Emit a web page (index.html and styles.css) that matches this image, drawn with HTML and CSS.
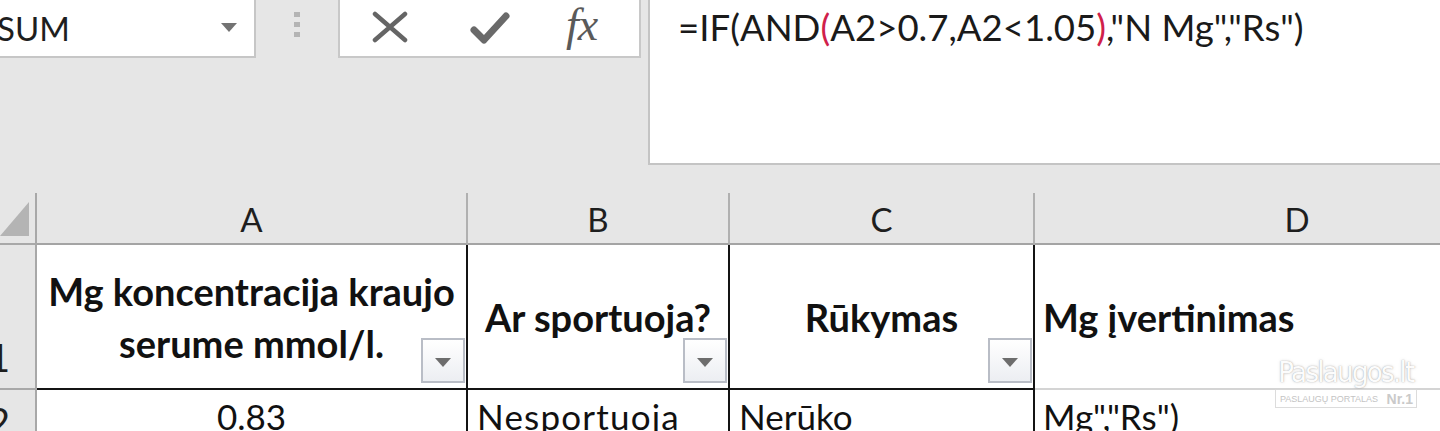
FILE: index.html
```html
<!DOCTYPE html>
<html lang="lt">
<head>
<meta charset="utf-8">
<title>Excel</title>
<link rel="stylesheet" href="styles.css">
</head>
<body>
<div class="app">
  <div class="toolbar">
    <div class="namebox">
      <span class="name">SUM</span>
      <svg class="nb-arrow" width="16" height="9" viewBox="0 0 16 9"><path d="M0 0H16L8 9Z" fill="#737373"/></svg>
    </div>
    <div class="grip"><i></i><i></i><i></i></div>
    <div class="fbtns">
      <svg class="ic-x" width="36" height="32" viewBox="0 0 36 32"><path d="M3 3L33 29M33 3L3 29" stroke="#656565" stroke-width="4.5" stroke-linecap="round" fill="none"/></svg>
      <svg class="ic-check" width="40" height="33" viewBox="0 0 40 33"><path d="M4 19L14 29L36 5" stroke="#6a6a6a" stroke-width="7" stroke-linecap="round" stroke-linejoin="round" fill="none"/></svg>
      <span class="fx">fx</span>
    </div>
    <div class="fbar">
      <span class="formula">=IF(AND<span class="paren">(</span>A2&gt;0.7,A2&lt;1.05<span class="paren">)</span>,"N Mg","Rs")</span>
    </div>
  </div>

  <div class="sheet">
    <div class="corner"><svg width="29" height="34" viewBox="0 0 29 34"><path d="M29 0V34H0Z" fill="#b4b4b4"/></svg></div>
    <div class="colhead">A</div>
    <div class="colhead">B</div>
    <div class="colhead">C</div>
    <div class="colhead last">D</div>

    <div class="rowhead"><span>1</span></div>
    <div class="cell hdr boxed">
      <span>Mg koncentracija kraujo<br>serume mmol/l.</span>
      <span class="filter"><svg width="16" height="9" viewBox="0 0 16 9"><path d="M0 0H16L8 9Z" fill="#6d6d6d"/></svg></span>
    </div>
    <div class="cell hdr boxed">
      <span>Ar sportuoja?</span>
      <span class="filter"><svg width="16" height="9" viewBox="0 0 16 9"><path d="M0 0H16L8 9Z" fill="#6d6d6d"/></svg></span>
    </div>
    <div class="cell hdr boxed">
      <span>Rūkymas</span>
      <span class="filter"><svg width="16" height="9" viewBox="0 0 16 9"><path d="M0 0H16L8 9Z" fill="#6d6d6d"/></svg></span>
    </div>
    <div class="cell hdr left plain">
      <span>Mg įvertinimas</span>
    </div>

    <div class="rowhead r2"><span>2</span></div>
    <div class="cell data center boxed">0.83</div>
    <div class="cell data boxed wide">Nesportuoja</div>
    <div class="cell data boxed">Nerūko</div>
    <div class="cell data plain">Mg","Rs")</div>
  </div>

  <div class="watermark">
    <div class="wm-title">Paslaugos.lt</div>
    <div class="wm-sub"><span>PASLAUGŲ PORTALAS</span><b>Nr.1</b></div>
  </div>
</div>
</body>
</html>
```

FILE: styles.css
```css
html, body {
  margin: 0;
  padding: 0;
}
body {
  width: 1440px;
  height: 431px;
  overflow: hidden;
  background: #e6e6e6;
  font-family: Lato, "Noto Sans", sans-serif;
  color: #111;
}
.app {
  position: relative;
  width: 1440px;
  height: 431px;
  overflow: hidden;
}

/* ---------- toolbar ---------- */
.toolbar {
  display: flex;
  align-items: flex-start;
  height: 165px;
}
.namebox {
  box-sizing: border-box;
  width: 256px;
  height: 58px;
  background: #fff;
  border-right: 2px solid #c6c6c6;
  border-bottom: 2px solid #c6c6c6;
  display: flex;
  align-items: center;
  justify-content: space-between;
  padding-right: 17px;
}
.name {
  font-size: 33px;
  margin-left: -3px;
  margin-top: -1px;
  color: #1e1e1e;
}
.nb-arrow {
  margin-top: -2px;
}
.grip {
  width: 82px;
  display: flex;
  flex-direction: column;
  align-items: center;
  gap: 5px;
  padding-top: 12px;
}
.grip i {
  display: block;
  width: 6px;
  height: 5px;
  background: #b4b4b4;
}
.fbtns {
  box-sizing: border-box;
  width: 303px;
  height: 58px;
  background: #fff;
  border: 2px solid #c8c8c8;
  border-top: none;
  display: flex;
  align-items: center;
  padding-left: 32px;
}
.ic-x {
  margin-top: -2px;
}
.ic-check {
  margin-left: 62px;
  margin-top: -2px;
}
.fx {
  margin-left: 56px;
  font-family: "Liberation Serif", serif;
  font-style: italic;
  font-size: 46px;
  color: #5a5a5a;
  margin-top: -8px;
  letter-spacing: -1px;
}
.fbar {
  box-sizing: border-box;
  margin-left: 7px;
  flex: 1;
  height: 165px;
  background: #fff;
  border-left: 2px solid #c4c4c4;
  border-bottom: 2px solid #c4c4c4;
  padding-left: 28px;
  padding-top: 5px;
}
.formula {
  font-size: 36.6px;
  color: #1a1a1a;
  line-height: 44px;
}
.paren {
  color: #d0204a;
}

/* ---------- sheet ---------- */
.sheet {
  margin-top: 28px;
  display: grid;
  grid-template-columns: 37px 431px 262px 305px 524px;
  grid-template-rows: 52px 145px 60px;
}
.corner {
  box-sizing: border-box;
  border-right: 2px solid #a8a8a8;
  border-bottom: 2px solid #a8a8a8;
  padding-top: 9px;
}
.corner svg {
  display: block;
}
.colhead {
  box-sizing: border-box;
  border-right: 2px solid #b0b0b0;
  border-bottom: 2px solid #a4a4a4;
  display: flex;
  align-items: center;
  justify-content: center;
  font-size: 33px;
  color: #1e1e1e;
  padding-top: 2px;
}
.colhead.last {
  border-right: none;
}
.rowhead {
  box-sizing: border-box;
  border-right: 2px solid #a8a8a8;
  border-bottom: 2px solid #a8a8a8;
  display: flex;
  align-items: flex-end;
  justify-content: flex-end;
  padding-right: 25px;
  padding-bottom: 12px;
  font-size: 38px;
  line-height: 1;
  color: #1e1e1e;
}
.rowhead.r2 {
  align-items: flex-start;
  padding-top: 12px;
  padding-bottom: 0;
  border-bottom: none;
}
.cell {
  box-sizing: border-box;
  background: #fff;
  position: relative;
  display: flex;
}
.cell.boxed {
  border-right: 2px solid #141414;
}
.hdr {
  border-bottom: 2px solid #141414;
  align-items: center;
  justify-content: center;
  text-align: center;
  font-weight: 700;
  font-size: 38px;
  line-height: 52px;
}
.hdr.left {
  justify-content: flex-start;
  text-align: left;
  padding-left: 8px;
  border-bottom-color: #d4d4d4;
}
.filter {
  position: absolute;
  right: 1px;
  bottom: 5px;
  box-sizing: border-box;
  width: 44px;
  height: 45px;
  border: 2px solid #b9bdc6;
  background: linear-gradient(#ffffff, #eceef2);
  display: flex;
  align-items: center;
  justify-content: center;
}
.filter svg {
  margin-top: 4px;
}
.data {
  font-size: 35px;
  padding-left: 9px;
  padding-top: 6px;
  line-height: 40px;
  color: #111;
}
.data.wide {
  letter-spacing: 1.2px;
}
.data.center {
  justify-content: center;
  padding-left: 0;
}
.data.plain {
  padding-left: 8px;
}

/* ---------- watermark overlay ---------- */
.watermark {
  position: absolute;
  left: 1275px;
  top: 355px;
  width: 142px;
  display: flex;
  flex-direction: column;
  align-items: stretch;
}
.wm-title {
  font-family: "DejaVu Sans", sans-serif;
  font-stretch: condensed;
  font-weight: 400;
  font-size: 29px;
  line-height: 34px;
  letter-spacing: -1.7px;
  color: rgba(255, 255, 255, 0.98);
  text-shadow: 0 0 1px rgba(110, 110, 110, 0.55), 0 0 3px rgba(130, 130, 130, 0.35);
  text-align: center;
  white-space: nowrap;
}
.wm-sub {
  box-sizing: border-box;
  margin-top: 0;
  border: 1px solid rgba(205, 205, 205, 0.7);
  background: rgba(255, 255, 255, 0.55);
  height: 19px;
  display: flex;
  align-items: center;
  justify-content: space-between;
  padding: 0 3px 0 4px;
  font-family: "Liberation Sans", sans-serif;
  font-size: 9px;
  color: #c4c4c4;
  white-space: nowrap;
}
.wm-sub b {
  font-size: 14px;
  color: #cacaca;
}
```
